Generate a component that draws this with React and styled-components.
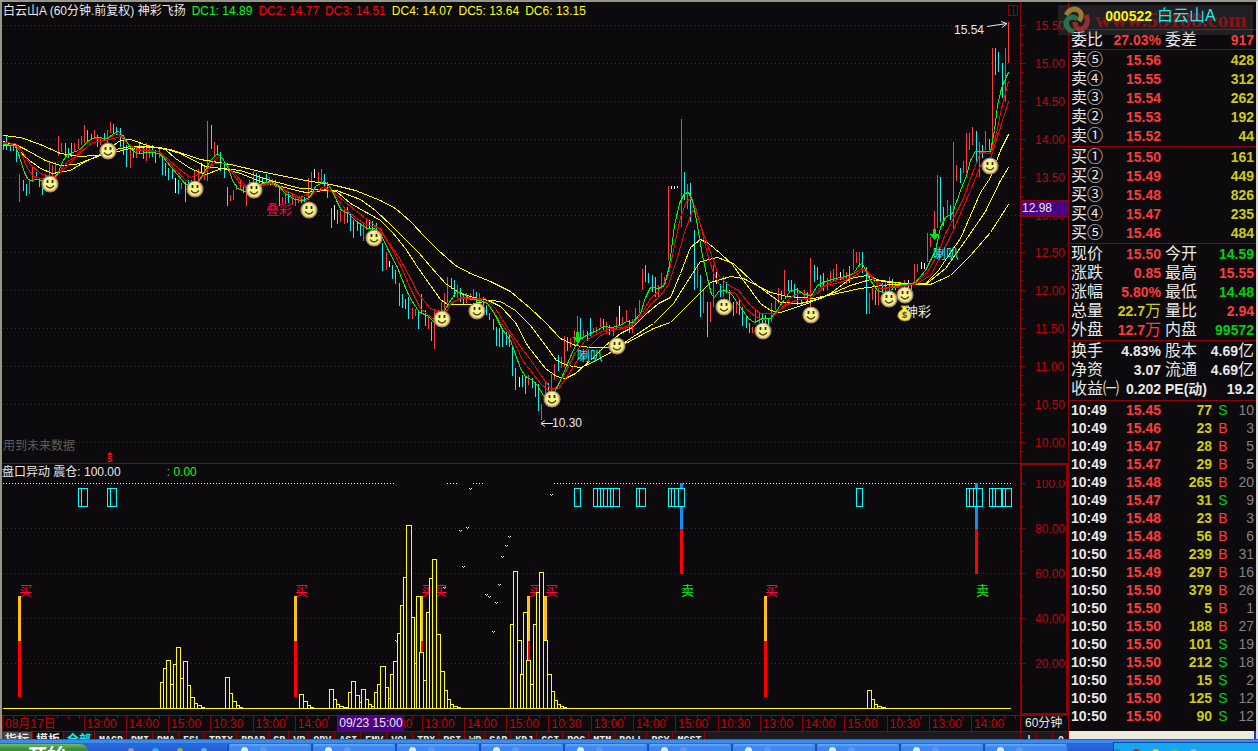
import React from "react";
import styled, { createGlobalStyle } from "styled-components";

const c = {
  bg: "#0c0a0d",
  line: "#8c0408",
  grid: "#7c0c10",
  axis: "#c00408",
  up: "#ff3c3c",
  down: "#14f0f0",
  white: "#e8e8e8",
  gold: "#cccc14",
  green: "#00d010",
  gray: "#828282",
  select: "#4b0088",
};

const GlobalStyle = createGlobalStyle`
  * { box-sizing: border-box; }
  body {
    margin: 0;
    background: ${c.bg};
    color: ${c.white};
    font: 12px/16px "Liberation Sans", "Noto Sans CJK SC", sans-serif;
    overflow: hidden;
  }
  button { font: inherit; color: inherit; border: 0; padding: 0; margin: 0; background: none; }
`;

const Frame = styled.main`
  display: grid;
  grid-template-columns: minmax(0, 1fr) 188px;
  border: solid #96968a;
  border-width: 2px 2px 0 2px;
  border-right-color: #d8dce4;
`;

const ChartColumn = styled.section`
  display: flex;
  flex-direction: column;
  min-width: 0;
`;

const PaneTitle = styled.header`
  display: flex;
  height: 17px;
  gap: 6px;
  padding-left: ${(p) => (p.$framed ? 0 : 1)}px;
  line-height: ${(p) => (p.$framed ? 17 : 19)}px;
  white-space: nowrap;
  border-top: ${(p) => (p.$framed ? `1px solid ${c.line}` : "0")};
`;

const TitleText = styled.span`
  color: ${(p) => p.$color || c.white};
  margin-left: ${(p) => (p.$gap ? "40px" : "0")};
`;

const Corner = styled.span`
  width: 48px;
  margin-left: ${(p) => (p.$framed ? "auto" : "0")};
  border-left: ${(p) => (p.$framed ? 2 : 1)}px solid ${c.line};
  border-right: ${(p) => (p.$framed ? 2 : 0)}px solid ${c.line};
  border-top: ${(p) => (p.$framed ? 1 : 0)}px solid ${c.line};
`;

const PaneButton = styled.button`
  display: flex;
  justify-content: flex-end;
  margin: 3px -4px 0 auto;
  width: 10px;
  height: 11px;
  border: 1px solid ${c.line};

  &::after {
    content: "";
    width: 3px;
    height: 9px;
    border-left: 1px solid ${c.line};
  }
`;

const Plot = styled.svg`
  display: block;
  width: 100%;
  height: auto;
`;

const TimeAxis = styled.div`
  display: flex;
  height: 17px;
  border: solid ${c.line};
  border-width: 1px 0;
  color: ${c.axis};
`;

const TimeScale = styled.div`
  position: relative;
  display: flex;
  flex: 1;
  min-width: 0;
`;

const TimeCell = styled.span`
  flex: ${(p) => p.$span} 1 0;
  min-width: 0;
  padding-left: 2px;
  line-height: 16px;
  white-space: nowrap;
  border-left: 1px solid ${c.line};
  background: repeating-linear-gradient(90deg, transparent 0 10px, ${c.line} 10px 11px) 0 0 / 100% 3px no-repeat;
`;

const CursorTime = styled.span`
  position: absolute;
  left: 33%;
  top: 0;
  width: 66px;
  height: 15px;
  line-height: 15px;
  text-align: center;
  background: ${c.select};
  color: ${c.white};
`;

const Period = styled.span`
  width: 48px;
  padding-left: 4px;
  line-height: 14px;
  border-left: 1px solid ${c.line};
  color: ${c.white};
`;

const IndicatorTabs = styled.nav`
  display: flex;
  height: 7px;
  overflow: hidden;
  background: #1c1a1d;
`;

const Tab = styled.button`
  padding: ${(p) => (p.$cjk ? "0 3px" : "0 3px 0 4px")};
  min-width: ${(p) => (p.$cjk ? "31px" : "16px")};
  height: 18px;
  border-right: 1px solid ${c.line};
  background: ${(p) => (p.$active ? "#484848" : p.$dark ? c.bg : "transparent")};
  color: ${(p) => (p.$cyan ? c.down : c.white)};
  font: bold 10px/18px "Liberation Mono", "Noto Sans CJK SC", monospace;
  font-size: ${(p) => (p.$cjk ? "12px" : "10px")};
  white-space: nowrap;
`;

const TabEnd = styled.span`
  display: flex;
  width: 48px;
  margin-left: auto;
  border-left: 1px solid ${c.line};
`;

const QuoteColumn = styled.aside`
  display: flex;
  flex-direction: column;
  border-left: 1px solid ${c.line};
`;

const StockTitle = styled.h1`
  display: flex;
  position: relative;
  align-items: center;
  justify-content: center;
  gap: 5px;
  height: 28px;
  margin: 0;
  padding-right: 4px;
  border-bottom: 1px solid ${c.line};
  font-size: 14px;
  color: #f4f414;
`;

const StockCode = styled.span`
  position: relative;
  z-index: 2;
`;

const StockName = styled(StockCode)`
  font-size: 16px;
  font-weight: 400;
  color: ${c.down};
`;

const Watermark = styled.span`
  position: absolute;
  top: 3px;
  right: 3px;
  width: 195px;
  height: 30px;
  display: flex;
  align-items: center;
  gap: 5px;
  padding-left: 4px;
  background: rgba(110, 110, 110, 0.22);
  color: rgba(170, 16, 20, 0.75);
  font: bold 22px/30px "Liberation Serif", serif;
  z-index: 1;
`;

const Section = styled.div`
  padding-bottom: ${(p) => p.$pad || 0}px;
  border-bottom: 1px solid ${c.line};
`;

const DataTable = styled.table`
  width: 100%;
  table-layout: fixed;
  border-spacing: 0;
`;

const Row = styled.tr`
  height: ${(p) => p.$h || 19}px;
`;

const Label = styled.th`
  padding: 0 0 0 ${(p) => (p.$second ? 4 : 2)}px;
  text-align: left;
  white-space: nowrap;
  font-size: ${(p) => (p.$latin ? 14 : 16)}px;
  font-weight: ${(p) => (p.$latin ? 700 : 400)};
  line-height: 18px;
`;

const Value = styled.td`
  padding: 0 ${(p) => (p.$edge ? 2 : 0)}px 0 0;
  text-align: ${(p) => p.$align || "right"};
  white-space: nowrap;
  font-size: 14px;
  font-weight: ${(p) => (p.$plain ? 400 : 700)};
  line-height: 18px;
  color: ${(p) => p.$color || c.white};
`;

const Unit = styled.span`
  font-size: 16px;
  font-weight: 400;
`;

const FooterStrip = styled.div`
  margin-top: auto;
  height: 8px;
  background: #ece9d8;
  border-right: 2px solid #0838d0;
`;

const Taskbar = styled.footer`
  display: flex;
  height: 12px;
  padding-top: 5px;
  overflow: hidden;
  background: linear-gradient(#2a62d0 0 1px, #3c8cf0 1px 4px, #2668dc 4px 8px, #2458d0);
`;

const StartButton = styled.button`
  width: 88px;
  height: 24px;
  border-radius: 0 8px 0 0;
  background: linear-gradient(#70b868, #389038 5px);
  color: #fff;
  font: italic bold 20px/22px "Liberation Sans", "Noto Sans CJK SC", sans-serif;
`;

const QuickLaunch = styled.span`
  width: 139px;
  display: flex;
  justify-content: center;
  gap: 18px;
  padding: 4px 20px 0 40px;
`;

const Dot = styled.i`
  width: 7px;
  height: 7px;
  border-radius: 4px 4px 0 0;
  background: ${(p) => p.$color};
`;

const TaskButton = styled.button`
  flex: 0 1 84px;
  display: flex;
  align-items: flex-start;
  height: 22px;
  padding: 3px 12px;
  gap: 12px;
  border-left: 2px solid #1c50b8;
  border-radius: 3px;
  background: linear-gradient(#70acfc, #3c88f0 3px);
`;

const Tray = styled.span`
  display: flex;
  gap: 12px;
  width: 145px;
  height: 14px;
  margin-left: auto;
  margin-top: -2px;
  padding: 6px 0 0 0;
  border-top: 1px solid #1040a0;
  border-left: 1px solid #0c4090;
  background: #14a8f0;
`;

/* Each entry is "x top-bottom" of one price bar. */
const RISING = `19 174-202,29 179-194,32 167-182,45 175-187,49 161-177,52 165-177,55 162-173,58 136-156,61 143-152,74 143-152,78 139-149,81 136-145,84 125-143,94 130-138,100 137-145,107 130-143,110 122-133,130 148-168,136 147-158,146 143-161,149 145-158,159 149-158,181 183-189,191 180-193,194 170-187,198 169-183,204 167-180,207 121-181,214 142-157,230 195-201,233 190-200,236 185-190,240 179-190,246 193-206,249 180-197,253 171-182,269 177-183,272 179-184,282 197-203,285 193-204,292 193-205,295 198-206,298 197-203,308 178-200,311 172-192,318 172-183,321 169-183,340 211-222,344 210-224,363 222-241,366 218-230,386 252-270,412 308-319,415 309-316,428 317-329,434 309-349,438 310-317,441 302-313,444 293-312,447 277-303,457 285-298,466 293-303,470 293-300,473 289-300,479 293-303,528 375-385,541 404-420,545 381-393,551 374-393,554 364-380,561 357-368,564 336-367,570 338-347,574 330-343,577 316-337,583 330-337,593 328-333,596 327-333,600 318-327,606 322-332,613 328-336,616 317-330,622 317-324,626 310-322,632 319-333,635 308-325,639 300-313,642 269-290,658 285-297,661 273-288,664 277-285,668 186-260,681 119-227,687 184-209,697 263-288,703 290-313,710 302-322,713 265-307,723 276-297,736 302-313,752 327-333,755 309-323,759 313-323,771 303-322,775 298-310,778 288-303,784 270-295,804 290-297,810 258-307,827 278-290,830 271-282,833 269-282,836 264-280,843 269-280,846 272-284,853 249-270,856 252-263,859 252-267,869 293-314,872 288-300,878 288-305,885 280-295,889 277-290,898 282-288,904 280-288,914 264-283,917 264-272,927 233-262,930 237-247,934 211-233,937 175-228,947 200-215,953 142-230,956 165-181,963 161-173,966 133-173,969 133-150,972 127-145,979 142-177,985 131-150,992 48-150,1005 48-102,1008 22-63`;
const FALLING = `3 142-150,6 135-150,10 143-151,13 143-151,16 147-162,23 180-191,26 184-196,36 172-177,39 180-187,42 182-195,65 143-157,68 148-158,71 143-157,87 130-143,91 134-139,97 135-147,104 133-140,113 124-133,116 127-135,120 128-147,123 135-155,126 145-167,133 148-158,139 143-153,143 148-159,152 145-157,155 150-163,162 157-175,165 163-176,168 168-180,172 168-179,178 180-194,185 182-202,188 180-192,211 125-149,217 145-155,220 152-171,224 162-178,227 187-206,243 185-193,256 173-183,259 175-183,262 177-185,266 174-182,275 180-187,279 185-206,288 191-203,301 196-203,304 197-202,324 174-187,327 182-198,331 208-228,337 210-224,347 207-223,350 213-231,353 220-238,357 221-231,360 223-236,372 221-230,376 223-232,382 243-271,392 265-279,395 270-284,399 283-306,402 294-308,405 299-309,408 297-319,418 311-329,421 294-313,425 310-326,431 322-341,451 278-289,454 280-297,460 288-302,463 295-305,476 292-305,483 297-308,486 305-315,489 313-320,493 319-330,496 327-346,499 328-347,502 330-347,506 332-345,509 335-347,512 345-376,515 368-390,522 375-387,525 377-394,532 378-388,535 382-397,538 384-411,548 383-397,558 355-371,567 337-351,580 318-337,587 331-341,590 318-336,603 319-330,609 325-335,629 320-333,645 265-282,648 273-283,652 275-292,655 277-297,684 172-200,690 183-222,694 230-290,700 275-317,707 302-337,720 284-297,726 282-293,729 290-302,733 302-316,739 300-315,742 307-326,746 317-328,749 323-333,762 313-323,765 315-323,768 318-327,781 291-300,788 280-291,791 280-292,794 284-297,797 288-305,801 299-305,807 292-303,814 265-282,817 267-280,820 275-287,823 273-291,849 266-283,862 252-273,866 267-314,875 290-305,882 283-293,892 279-290,895 282-290,911 283-293,940 177-222,943 207-226,950 205-220,960 168-183,976 131-162,982 145-158,989 139-150,995 48-75,998 52-72,1002 63-98`;
const FLAT = `175 178-193,201 163-172,314 169-178,334 205-220,369 220-228,389 261-267,519 377-387,619 306-325,671 186-189,674 186-189,677 186-188,716 272-284,840 272-280,908 280-290,921 262-269,924 263-269`;

const bars = (list) =>
  list.split(",").map((b) => {
    const [x, span] = b.split(" ");
    const [top, bottom] = span.split("-");
    return `M${x} ${top}V${bottom}`;
  }).join("");

const AVERAGES = [
  ["#ffff00", "3,135 20,137 40,144 60,153 80,156 105,154 130,148 150,146 170,149 200,159 230,164 260,171 300,179 335,185 355,190 380,200 395,208 410,221 425,237 438,250 455,265 470,273 490,281 510,291 530,308 545,322 560,338 575,345 590,347 607,347 627,342 653,328 670,322 692,300 710,282 730,276 743,278 770,292 787,296 813,298 860,288 890,284 930,284 950,275 970,255 990,232 1008,204"],
  ["#ffff00", "3,145 15,144 25,149 45,160 60,165 75,164 95,157 115,149 130,146 160,147 180,153 205,166 222,168 240,170 270,180 300,188 320,189 336,190 360,199 375,210 392,226 405,239 418,252 430,266 445,283 460,293 480,299 500,301 515,310 530,325 545,345 556,360 567,365 580,367 592,362 610,352 630,338 653,323 673,303 692,273 700,261 717,257 733,263 753,282 765,291 780,302 800,303 820,298 850,285 870,279 890,282 925,284 945,268 965,240 985,211 1000,180 1008,167"],
  ["#ffff00", "3,141 15,145 25,157 40,168 52,173 70,170 85,161 100,154 120,140 130,139 150,146 165,149 175,158 190,168 205,174 222,168 240,173 260,181 280,186 305,192 325,190 336,191 350,203 366,212 380,220 392,232 405,248 418,268 430,285 440,299 447,304 470,304 488,300 500,306 515,322 527,345 545,368 556,376 565,378 575,373 590,360 605,345 620,333 632,327 645,314 658,303 670,297 680,273 690,247 700,239 708,243 720,253 732,264 743,280 760,303 770,310 780,312 807,303 830,293 850,278 866,275 880,280 905,283 925,283 938,270 950,252 960,238 970,215 980,192 990,177 1000,150 1008,134"],
  ["#ff0000", "3,142 15,143 22,151 30,164 40,173 55,177 68,164 80,152 92,142 105,140 120,136 130,145 140,149 158,151 168,159 178,168 190,177 203,172 214,163 224,163 233,172 245,185 255,187 270,183 285,190 300,197 312,192 325,188 335,193 345,202 355,210 368,220 378,228 388,242 398,256 408,274 418,294 430,308 440,312 450,303 460,298 485,298 495,308 508,329 520,346 530,359 540,374 550,388 558,388 568,374 578,358 590,345 600,335 612,330 628,327 640,318 650,304 660,295 668,284 676,260 684,232 692,210 696,212 702,230 710,252 718,275 727,284 738,290 750,305 760,313 775,313 785,305 795,300 812,297 825,285 840,282 855,275 864,268 875,280 885,287 915,284 930,275 940,256 950,236 960,213 970,190 980,165 990,158 998,133 1008,101"],
  ["#ff0000", "3,143 15,145 20,151 26,166 32,175 40,178 52,178 60,170 67,161 75,156 84,145 92,138 108,138 116,133 122,136 128,143 135,150 158,151 165,158 175,169 185,180 195,184 203,175 212,162 219,155 225,162 233,174 240,184 250,189 262,184 272,182 280,186 290,195 306,200 314,192 325,185 330,188 338,200 345,209 355,217 365,224 380,228 390,246 400,265 410,288 420,308 432,318 442,318 450,304 460,297 470,298 482,299 490,306 500,322 510,335 516,346 522,360 530,370 540,383 548,390 556,387 565,372 575,352 585,340 597,333 610,328 622,327 632,324 642,312 650,298 660,289 668,275 674,245 680,217 686,201 690,198 695,207 700,224 706,250 712,270 718,283 725,290 735,293 745,308 755,316 762,319 770,318 780,309 790,297 800,292 812,295 820,287 835,280 850,275 862,268 870,276 880,288 895,287 915,283 928,270 938,252 945,233 955,214 963,198 970,178 980,152 990,153 996,133 1001,108 1008,81"],
  ["#00ff00", "3,144 14,145 17,150 20,160 24,172 27,178 30,180 37,179 50,182 58,172 62,161 67,154 78,150 88,140 95,137 107,138 113,133 118,131 123,136 128,144 133,151 138,153 150,152 158,153 163,157 170,166 177,174 185,184 195,186 203,173 210,160 217,153 222,158 228,168 232,180 237,188 245,191 253,188 262,183 270,181 277,184 285,193 294,199 303,200 310,196 315,186 324,181 330,187 337,202 341,210 348,213 355,220 360,224 367,228 374,228 380,233 388,250 397,267 400,275 407,292 413,303 419,312 427,315 433,321 440,318 447,305 456,291 463,293 470,299 480,300 487,303 495,315 502,329 510,340 515,354 520,368 525,376 532,380 537,385 543,395 551,396 556,388 560,380 565,368 573,349 580,339 587,334 595,331 603,326 611,327 620,325 626,321 632,322 640,313 645,297 650,287 658,288 664,285 669,265 674,225 679,203 684,193 688,192 692,200 697,225 702,255 707,278 711,294 714,297 718,291 726,290 732,295 740,307 748,318 754,322 762,318 770,318 777,309 784,299 790,290 797,289 803,294 811,295 817,285 825,281 835,278 845,276 853,273 859,264 862,263 866,272 870,280 877,290 883,292 890,290 895,285 905,284 915,282 925,270 935,250 940,227 945,217 952,213 960,190 966,175 970,160 975,151 982,151 990,151 994,130 997,105 1001,88 1006,76 1008,72"],
];

const SMILEYS = [[50, 184], [108, 151], [195, 189], [254, 190], [309, 210], [374, 238], [442, 319], [477, 311], [552, 399], [617, 346], [724, 307], [763, 331], [811, 315], [889, 299], [905, 295], [990, 166]];

const PRICES = ["15.50", "15.00", "14.50", "14.00", "13.50", "13.00", "12.50", "12.00", "11.50", "11.00", "10.50", "10.00"];
const PRICE_Y = [25, 63, 101, 139, 177, 215, 252, 290, 328, 366, 404, 442];
const LEVELS = [["100.0", 483], ["80.00", 528], ["60.00", 573], ["40.00", 618], ["20.00", 663]];

/* Histogram bars: left, right, top. */
const HISTOGRAM = `160 163 682,163 166 668,166 170 660,170 173 684,173 176 664,176 180 647,180 183 678,183 187 661,187 190 685,190 194 697,194 197 703,197 201 705,201 204 707,225 229 677,229 232 693,232 236 701,236 239 705,239 242 707,299 303 694,303 307 701,307 310 705,310 313 707,329 333 689,333 336 699,336 339 704,339 343 706,343 347 707,348 351 692,351 355 681,355 359 695,359 361 702,361 365 689,365 368 699,368 371 704,371 374 706,374 377 692,377 380 684,380 385 666,385 388 687,388 390 698,390 393 674,393 397 661,397 400 633,400 403 605,403 406 577,406 411 525,411 414 617,414 416 663,416 420 596,419 423 652,423 426 680,426 429 612,429 432 578,432 436 559,436 440 634,440 444 671,444 447 690,447 450 699,450 453 704,453 457 706,457 460 707,510 513 624,513 517 571,517 521 640,520 523 674,523 527 612,526 530 660,530 533 684,533 536 624,536 539 592,539 543 572,543 547 640,547 551 674,551 554 691,554 557 700,557 560 704,560 563 706,563 566 707,867 871 690,871 874 699,874 877 704,877 881 706,881 885 707`
  .split(",").map((b) => b.split(" ").map(Number));

/* Signal boxes: left, right, inner dividers. */
const BOXES = [
  [78, 87, [81]], [107, 116, [110]], [574, 580, []], [593, 619, [597, 600, 603, 607, 610, 613]],
  [636, 645, [639]], [668, 684, [671, 674, 678]], [856, 862, []], [966, 982, [969, 973, 976]],
  [989, 1011, [992, 995, 1001, 1002, 1005]],
];
const BUY_BARS = [19, 295, 421, 528, 545, 765];
const BUY_MARKS = [19, 295, 421, 434, 529, 545, 765];
const SELL_BARS = [681, 976];
const TICKS_DOWN = [[470, 488], [460, 530], [467, 527], [463, 566], [444, 587], [509, 536], [506, 545], [502, 556], [499, 584], [486, 594], [489, 596], [496, 602], [493, 631], [551, 494], [396, 640]];

function Smiley({ x, y }) {
  return (
    <g transform={`translate(${x} ${y})`}>
      <circle r="8" fill="#f8c860" stroke="#8c8880" strokeWidth="1.2" />
      <circle r="6" fill="#f8f890" />
      <path d="M-6 -3A7 7 0 0 1 3 -6" fill="none" stroke="#fff0c0" />
      <path d="M-2.5 -4v3M2.5 -4v3" stroke="#302818" strokeWidth="1.8" />
      <path d="M-4 1.5Q0 6.5 4 1.5" fill="none" stroke="#504018" strokeWidth="1.3" />
    </g>
  );
}

function DownArrow({ x, y }) {
  return <path d={`M${x - 1.5} ${y - 5}h3v5h3.5L${x} ${y + 6}l-5 -6h3.5z`} fill="#00e810" />;
}

function AxisTicks({ ys, minor }) {
  return (
    <path
      d={ys.map((y) => `M1020.5 ${y + 0.5}h5`).join("") + minor.map((y) => `M1020.5 ${y + 0.5}h3`).join("")}
      stroke={c.line}
    />
  );
}

function PricePlot() {
  return (
    <Plot viewBox="2 19 1066 444" role="img" aria-label="60分钟K线">
      <path d={PRICE_Y.map((y) => `M3 ${y}.5H1020`).join("")} stroke={c.grid} strokeDasharray="1 3" />
      <path d="M1020.5 19V463" stroke={c.line} />
      <AxisTicks ys={PRICE_Y} minor={PRICE_Y.flatMap((y) => [y + 9, y + 19, y + 28]).filter((y) => y < 460)} />
      <g fill={c.axis} fontSize="12">
        {PRICES.map((p, i) => <text key={p} x="1035" y={PRICE_Y[i] + 5}>{p}</text>)}
      </g>
      <rect x="1021.5" y="200.5" width="47" height="16" fill={c.select} stroke={c.line} />
      <text x="1022" y="212" fontSize="12" fill={c.white}>12.98</text>
      <g transform="translate(0.5 0)" shapeRendering="crispEdges">
        <path d={bars(RISING)} stroke={c.up} />
        <path d={bars(FALLING)} stroke={c.down} />
        <path d={bars(FLAT)} stroke="#fff" />
      </g>
      <g fill="none" shapeRendering="crispEdges" transform="translate(0.5 0.5)">
        {AVERAGES.map(([color, points]) => <polyline key={points} points={points} stroke={color} />)}
      </g>
      {SMILEYS.map(([x, y]) => <Smiley key={x} x={x} y={y} />)}
      <DownArrow x={577.5} y={337} />
      <DownArrow x={934.5} y={234} />
      <g fontSize="13">
        <text x="266" y="214" fill="#f0083c">叠彩</text>
        <text x="577" y="360" fill={c.down}>喇叭</text>
        <text x="933" y="258" fill={c.down}>喇叭</text>
        <text x="905" y="316" fill={c.white}>神彩</text>
      </g>
      <path d="M901 306h7l-2 3q6 3 5 8q-1 4 -6 4t-7 -4q-1 -5 5 -8z" fill="#f0e868" stroke="#a88c18" />
      <text x="902" y="318" fontSize="9" fontWeight="700" fill="#604010">$</text>
      <g fontSize="12" fill={c.white}>
        <text x="954" y="34">15.54</text>
        <text x="552" y="427">10.30</text>
      </g>
      <path d="M987 26.500L1007 23.500M1001 21.500l6 2l-5 4M541 423.500h12M545 420.500l-4 3l4 3" stroke={c.white} fill="none" />
      <text x="3" y="450" fontSize="12" fill="#5e5e58">用到未来数据</text>
      <path d="M107 455l3 -3l3 3z" fill="#ff1010" />
      <text x="107" y="462" fontSize="10" fontWeight="700" fill="#ff1010">s</text>
    </Plot>
  );
}

function SignalPlot() {
  return (
    <Plot viewBox="2 480 1066 235" role="img" aria-label="盘口异动">
      <path d={LEVELS.slice(1).map(([, y]) => `M3 ${y}.5H1020`).join("")} stroke={c.grid} strokeDasharray="1 3" />
      <path d="M3 483.500H395M447 483.500H459M473 483.500H485M554 483.500H1011" stroke="#fff" strokeDasharray="1 2" />
      <path d="M1021 480V714H1067V480" fill="none" stroke={c.line} strokeWidth="2" />
      <AxisTicks ys={LEVELS.map((l) => l[1])} minor={LEVELS.map((l) => l[1] + 23)} />
      <g fill={c.axis} fontSize="12">
        {LEVELS.map(([t, y]) => <text key={t} x="1035" y={y + 5}>{t}</text>)}
      </g>
      <g fontSize="13">
        {BUY_MARKS.map((x) => <text key={x} x={x} y="595" fill="#ff0838">买</text>)}
        {SELL_BARS.map((x) => <text key={x} x={x} y="595" fill="#10f010">卖</text>)}
      </g>
      <g shapeRendering="crispEdges">
        {BUY_BARS.map((x) => (
          <g key={x}>
            <rect x={x - 1} y="596" width="3" height="45" fill="#ffc010" />
            <rect x={x - 1} y="641" width="3" height="56" fill={x === 545 ? "none" : "#ff0000"} />
          </g>
        ))}
        {SELL_BARS.map((x) => (
          <g key={x}>
            <rect x={x - 1} y="483" width="3" height="46" fill="#1090f0" />
            <rect x={x - 1} y="529" width="3" height="45" fill="#ff0000" />
          </g>
        ))}
        {BOXES.map(([l, r, inner]) => (
          <path key={l} d={`M${l}.5 488.500H${r}.5V506.500H${l}.5z${inner.map((x) => `M${x}.5 488V506`).join("")}`} fill={c.bg} stroke="#00ffff" />
        ))}
        {HISTOGRAM.map(([l, r, top]) => (
          <path key={l} d={`M${l}.5 708.500V${top}.5H${r}.5V708.500`} fill={c.bg} stroke="#ffff00" />
        ))}
        <path d="M3 708.500H1011" stroke="#ffff00" />
      </g>
      <path d={TICKS_DOWN.map(([x, y]) => `M${x - 1} ${y}l1.5 1.5l1.5 -1.5`).join("")} fill="none" stroke="#fff" />
    </Plot>
  );
}

const HOURS = ["13:00", "14:00", "15:00", "10:30"];
/* The seventh slot is taken by the cursor's own time label. */
const TIMES = Array.from({ length: 22 }, (_, i) => (i === 6 ? "" : HOURS[i % 4]));
const INDICATORS = ["MACD", "DMI", "DMA", "FSL", "TRIX", "BRAR", "CR", "VR", "OBV", "ASI", "EMV", "VOL", "TRX", "RSI", "WR", "SAR", "KDJ", "CCI", "ROC", "MTM", "BOLL", "PSY", "MCST"];
const DC = [["DC1: 14.89", "#00ff20"], ["DC2: 14.77", "#f80808"], ["DC3: 14.51", "#f80808"], ["DC4: 14.07", "#ffff00"], ["DC5: 13.64", "#ffff00"], ["DC6: 13.15", "#ffff00"]];

const ASKS = [["卖⑤", "15.56", 428], ["卖④", "15.55", 312], ["卖③", "15.54", 262], ["卖②", "15.53", 192], ["卖①", "15.52", 44]];
const BIDS = [["买①", "15.50", 161], ["买②", "15.49", 449], ["买③", "15.48", 826], ["买④", "15.47", 235], ["买⑤", "15.46", 484]];
const RATIO = [["委比", "27.03%", c.up, "委差", "917", c.up]];
const STATS = [
  ["现价", "15.50", c.up, "今开", "14.59", c.green],
  ["涨跌", "0.85", c.up, "最高", "15.55", c.up],
  ["涨幅", "5.80%", c.up, "最低", "14.48", c.green],
  ["总量", "22.7万", c.gold, "量比", "2.94", c.up],
  ["外盘", "12.7万", c.up, "内盘", "99572", c.green],
];
const BASICS = [
  ["换手", "4.83%", c.white, "股本", "4.69亿", c.white],
  ["净资", "3.07", c.white, "流通", "4.69亿", c.white],
  ["收益㈠", "0.202", c.white, "PE(动)", "19.2", c.white],
];
const TRADES = `10:49 15.45 77 S 10,10:49 15.46 23 B 3,10:49 15.47 28 B 5,10:49 15.47 29 B 5,10:49 15.48 265 B 20,10:49 15.47 31 S 9,10:49 15.48 23 B 3,10:49 15.48 56 B 6,10:50 15.48 239 B 31,10:50 15.49 297 B 16,10:50 15.50 379 B 26,10:50 15.50 5 B 1,10:50 15.50 188 B 27,10:50 15.50 101 S 19,10:50 15.50 212 S 18,10:50 15.50 15 S 2,10:50 15.50 125 S 12,10:50 15.50 90 S 12`
  .split(",").map((t) => t.split(" "));

function Figure({ text }) {
  const unit = /[万亿]$/.test(text) ? text.slice(-1) : "";
  return <>{unit ? text.slice(0, -1) : text}{unit && <Unit>{unit}</Unit>}</>;
}

function PairTable({ rows, pad }) {
  return (
    <Section $pad={pad}>
      <DataTable>
        <colgroup><col width="42" /><col width="50" /><col width="46" /><col width="49" /></colgroup>
        <tbody>
          {rows.map(([a, av, ac, b, bv, bc]) => (
            <Row key={a}>
              <Label scope="row">{a}</Label>
              <Value $color={ac}><Figure text={av} /></Value>
              <Label scope="row" $second $latin={b.startsWith("PE")}>{b}</Label>
              <Value $edge $color={bc}><Figure text={bv} /></Value>
            </Row>
          ))}
        </tbody>
      </DataTable>
    </Section>
  );
}

function DepthTable({ rows }) {
  return (
    <Section $pad={1}>
      <DataTable>
        <colgroup><col width="42" /><col width="50" /><col /></colgroup>
        <tbody>
          {rows.map(([label, price, volume]) => (
            <Row key={label}>
              <Label scope="row">{label}</Label>
              <Value $color={c.up}>{price}</Value>
              <Value $edge $color={c.gold}>{volume}</Value>
            </Row>
          ))}
        </tbody>
      </DataTable>
    </Section>
  );
}

function TradeTable() {
  return (
    <DataTable>
      <colgroup><col width="42" /><col width="50" /><col width="51" /><col width="22" /><col width="22" /></colgroup>
      <tbody>
        {TRADES.map(([time, price, volume, side, count], i) => (
          <Row key={i} $h={18}>
            <Label scope="row" $latin>{time}</Label>
            <Value $color={c.up}>{price}</Value>
            <Value $color={c.gold}>{volume}</Value>
            <Value $align="center" $plain $color={side === "B" ? c.up : c.green}>{side}</Value>
            <Value $edge $plain $color={c.gray}>{count}</Value>
          </Row>
        ))}
      </tbody>
    </DataTable>
  );
}

function SwirlLogo() {
  return (
    <svg width="28" height="28" viewBox="0 0 28 28" fill="none" strokeWidth="5" opacity="0.85" aria-hidden="true">
      <path d="M4 9Q9 1 16 4Q22 8 17 15" stroke="#b08c30" />
      <path d="M24 9Q28 19 20 23Q13 24 13 16" stroke="#a83038" />
      <path d="M12 26Q2 22 5 14Q9 9 15 13" stroke="#288058" />
    </svg>
  );
}

export default function App() {
  return (
    <>
      <GlobalStyle />
      <Frame>
        <ChartColumn>
          <PaneTitle>
            <TitleText>白云山A (60分钟.前复权) 神彩飞扬</TitleText>
            {DC.map(([t, color]) => <TitleText key={t} $color={color}>{t}</TitleText>)}
            <PaneButton aria-label="布局" />
            <Corner />
          </PaneTitle>
          <PricePlot />
          <PaneTitle $framed>
            <TitleText>盘口异动 震仓: 100.00</TitleText>
            <TitleText $color="#00ff20" $gap>: 0.00</TitleText>
            <Corner $framed />
          </PaneTitle>
          <SignalPlot />
          <TimeAxis>
            <TimeScale>
              <TimeCell $span={84}>08月17日</TimeCell>
              {TIMES.map((t, i) => <TimeCell key={i} $span={i === 21 ? 49 : 42}>{t}</TimeCell>)}
              <CursorTime>09/23 15:00</CursorTime>
            </TimeScale>
            <Period>60分钟</Period>
          </TimeAxis>
          <IndicatorTabs>
            <Tab $cjk $active>指标</Tab>
            <Tab $cjk $dark>模板</Tab>
            <Tab $cjk $cyan>全部</Tab>
            {INDICATORS.map((t) => <Tab key={t}>{t}</Tab>)}
            <TabEnd><Tab>|</Tab><Tab aria-label="空" /><Tab>0</Tab></TabEnd>
          </IndicatorTabs>
        </ChartColumn>
        <QuoteColumn>
          <StockTitle>
            <StockCode>000522</StockCode>
            <StockName>白云山A</StockName>
            <Watermark><SwirlLogo />www.55188.com</Watermark>
          </StockTitle>
          <PairTable rows={RATIO} />
          <DepthTable rows={ASKS} />
          <DepthTable rows={BIDS} />
          <PairTable rows={STATS} pad={1} />
          <PairTable rows={BASICS} pad={2} />
          <TradeTable />
          <FooterStrip />
        </QuoteColumn>
      </Frame>
      <Taskbar>
        <StartButton>开始</StartButton>
        <QuickLaunch>
          <Dot $color="#a090c0" /><Dot $color="#30a8f0" /><Dot $color="#90b840" /><Dot $color="#60b0f8" />
        </QuickLaunch>
        {Array.from({ length: 10 }, (_, i) => (
          <TaskButton key={i} aria-label={`窗口 ${i + 1}`}><Dot $color="#d8ecf8" /><Dot $color="#5c98f0" /></TaskButton>
        ))}
        <Tray><Dot $color="#2080b0" /><Dot $color="#c02020" /><Dot $color="#f0c020" /><Dot $color="#50c060" /><Dot $color="#90b8d0" /></Tray>
      </Taskbar>
    </>
  );
}
